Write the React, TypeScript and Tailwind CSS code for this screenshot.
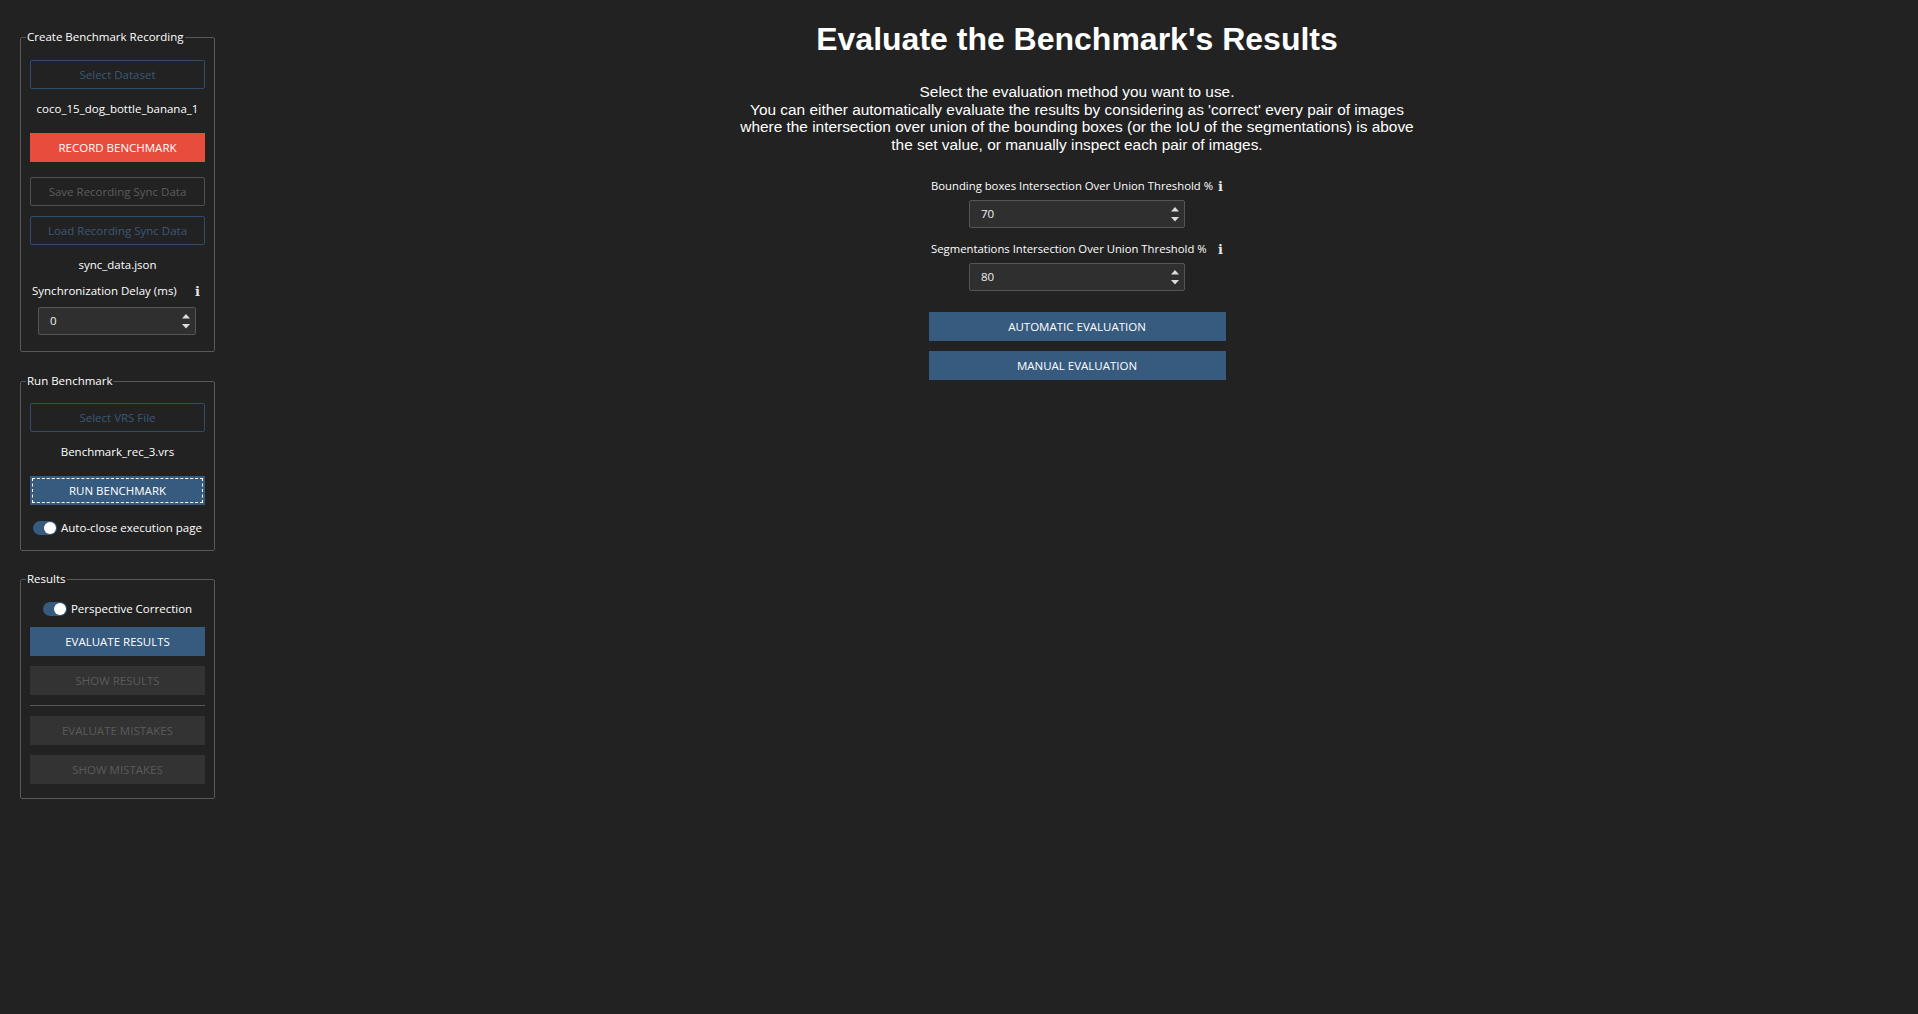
import React from "react";

const ui = { fontFamily: '"Open Sans", "Noto Sans", sans-serif' };
const arial = { fontFamily: '"Liberation Sans", Arial, sans-serif' };

const InfoIcon = () => (
  <span
    className="text-[13px] font-bold leading-none text-[#e8e8e8]"
    style={{ fontFamily: '"DejaVu Serif", serif' }}
  >
    i
  </span>
);

const SpinArrows = () => (
  <svg width="8" height="15" viewBox="0 0 8 15" className="text-[#dcdcdc]">
    <path d="M4 0 L8 4.5 L0 4.5 Z" fill="currentColor" />
    <path d="M0 10 L8 10 L4 14.5 Z" fill="currentColor" />
  </svg>
);

const SpinBox = ({ value, className = "" }: { value: string; className?: string }) => (
  <div
    className={`h-[28px] flex items-center justify-between bg-[#2f2f2f] border border-[#555555] rounded-[2px] pl-[11px] pr-[5px] text-[11.5px] text-[#f0f0f0] ${className}`}
  >
    <span>{value}</span>
    <SpinArrows />
  </div>
);

const Toggle = () => (
  <div className="w-[24px] h-[14px] rounded-full bg-[#375a7f] flex items-center justify-end pr-[1px]">
    <div className="w-[12px] h-[12px] rounded-full bg-white" />
  </div>
);

const Group = ({
  title,
  className = "",
  children,
}: {
  title: string;
  className?: string;
  children: React.ReactNode;
}) => (
  <fieldset
    className={`w-[195px] border border-[#585858] rounded-[2px] px-[9px] flex flex-col ${className}`}
  >
    <legend className="-ml-[4px] px-[1px] text-[11.5px] leading-[16px] text-white">{title}</legend>
    {children}
  </fieldset>
);

const btn = "h-[29px] w-full flex items-center justify-center text-[11.5px]";

const Sidebar = () => (
  <div className="w-[236px] shrink-0 pl-[20px] pt-[29px]" style={ui}>
    <Group title="Create Benchmark Recording" className="pb-[16px]">
      <button className={`${btn} mt-[15px] border border-[#2e4d6d] text-[#3b5878] rounded-[2px]`}>
        Select Dataset
      </button>
      <div className="mt-[12px] h-[16px] leading-[16px] text-center text-[11.5px] text-white">
        coco_15_dog_bottle_banana_1
      </div>
      <button className={`${btn} mt-[16px] bg-[#e74c3c] text-white`}>RECORD BENCHMARK</button>
      <button className={`${btn} mt-[15px] border border-[#505050] text-[#5c5c5c] rounded-[2px]`}>
        Save Recording Sync Data
      </button>
      <button className={`${btn} mt-[10px] border border-[#2e4d6d] text-[#3b5878] rounded-[2px]`}>
        Load Recording Sync Data
      </button>
      <div className="mt-[12px] h-[16px] leading-[16px] text-center text-[11.5px] text-white">
        sync_data.json
      </div>
      <div className="mt-[10px] h-[16px] flex items-center justify-between pl-[2px] pr-[5px] text-[11.5px] text-white">
        <span>Synchronization Delay (ms)</span>
        <InfoIcon />
      </div>
      <SpinBox value="0" className="mt-[8px] ml-[8px] mr-[9px]" />
    </Group>

    <Group title="Run Benchmark" className="mt-[21px] pb-[14px]">
      <button className={`${btn} mt-[14px] border border-[#2e4d6d] text-[#3b5878] rounded-[2px]`}>
        Select VRS File
      </button>
      <div className="mt-[12px] h-[16px] leading-[16px] text-center text-[11.5px] text-white">
        Benchmark_rec_3.vrs
      </div>
      <button
        className={`${btn} mt-[16px] bg-[#375a7f] text-white outline-1 outline-dashed outline-white -outline-offset-3`}
      >
        RUN BENCHMARK
      </button>
      <div className="mt-[15px] h-[16px] flex items-center justify-center gap-[4px] text-[11.5px] text-white">
        <Toggle />
        <span>Auto-close execution page</span>
      </div>
    </Group>

    <Group title="Results" className="mt-[20px] pb-[14px]">
      <div className="mt-[14px] h-[16px] flex items-center justify-center gap-[4px] text-[11.5px] text-white">
        <Toggle />
        <span>Perspective Correction</span>
      </div>
      <button className={`${btn} mt-[10px] bg-[#375a7f] text-white`}>EVALUATE RESULTS</button>
      <button className={`${btn} mt-[10px] bg-[#333333] text-[#5a5a5a]`}>SHOW RESULTS</button>
      <div className="mt-[10px] h-px bg-[#575757]" />
      <button className={`${btn} mt-[10px] bg-[#333333] text-[#5a5a5a]`}>EVALUATE MISTAKES</button>
      <button className={`${btn} mt-[10px] bg-[#333333] text-[#5a5a5a]`}>SHOW MISTAKES</button>
    </Group>
  </div>
);

const Evaluation = () => (
  <div className="flex-1 flex flex-col items-center pt-[21px]">
    <h1 className="text-[32px] leading-[37px] font-bold text-white" style={arial}>
      Evaluate the Benchmark's Results
    </h1>
    <p className="mt-[25px] text-center text-[15.4px] leading-[17.5px] text-white" style={arial}>
      Select the evaluation method you want to use.
      <br />
      You can either automatically evaluate the results by considering as 'correct' every pair of images
      <br />
      where the intersection over union of the bounding boxes (or the IoU of the segmentations) is above
      <br />
      the set value, or manually inspect each pair of images.
    </p>

    <div className="flex flex-col items-center" style={ui}>
      <div className="mt-[25px] w-[296px] h-[16px] flex items-center justify-between gap-[5px] pl-[2px] pr-[2px] text-[11.3px] text-white whitespace-nowrap">
        <span>Bounding boxes Intersection Over Union Threshold %</span>
        <InfoIcon />
      </div>
      <SpinBox value="70" className="mt-[6px] w-[216px]" />
      <div className="mt-[13px] w-[296px] h-[16px] flex items-center justify-between gap-[5px] pl-[2px] pr-[2px] text-[11.3px] text-white whitespace-nowrap">
        <span>Segmentations Intersection Over Union Threshold %</span>
        <InfoIcon />
      </div>
      <SpinBox value="80" className="mt-[6px] w-[216px]" />
      <button className="mt-[21px] w-[297px] h-[29px] bg-[#375a7f] text-white text-[11.5px]">
        AUTOMATIC EVALUATION
      </button>
      <button className="mt-[10px] w-[297px] h-[29px] bg-[#375a7f] text-white text-[11.5px]">
        MANUAL EVALUATION
      </button>
    </div>
  </div>
);

export default function App() {
  return (
    <div className="w-full h-screen bg-[#222222] flex overflow-hidden">
      <Sidebar />
      <Evaluation />
    </div>
  );
}
